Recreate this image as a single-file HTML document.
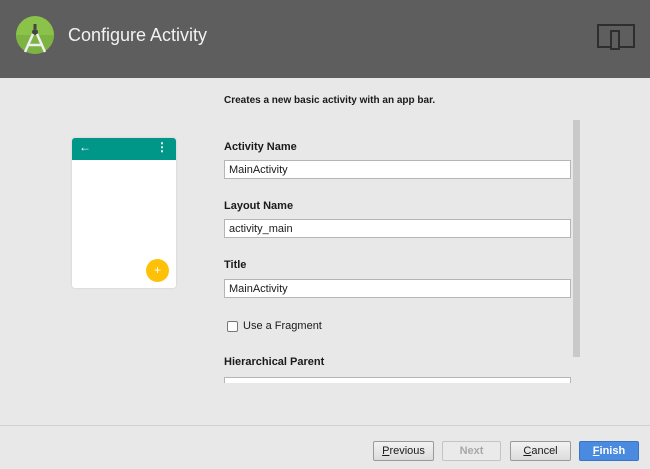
<!DOCTYPE html>
<html><head><style>
*{margin:0;padding:0;box-sizing:border-box}
body{width:650px;height:469px;background:#e8e8e8;font-family:"Liberation Sans",sans-serif;position:relative;overflow:hidden;font-size:11px;color:#1a1a1a}
.hdr{position:absolute;left:0;top:0;width:650px;height:78px;background:#5e5e5e}
.hdr h1{position:absolute;left:68px;top:25px;font-size:18px;font-weight:normal;color:#f2f2f2}
.a{position:absolute}
.lbl{position:absolute;left:224px;font-weight:bold;font-size:11px}
.fld{position:absolute;left:224px;width:347px;height:19px;background:#fff;border:1px solid #b5b5b5;padding:3px 4px;font-size:11px}
.btn{position:absolute;top:441px;height:20px;border:1px solid #9a9a9a;border-radius:2px;background:linear-gradient(#f2f2f2,#dcdcdc);text-align:center;font-size:11px;line-height:18px}
</style></head><body>
<div class="hdr">
<svg class="a" style="left:15px;top:15px" width="40" height="42" viewBox="0 0 40 42">
<circle cx="20" cy="20" r="19" fill="#8bc34a"/>
<path d="M1 20a19 19 0 0 0 38 0z" fill="#7cb342"/>
<circle cx="20" cy="17" r="3" fill="#444"/>
<rect x="18.5" y="9" width="3" height="5" fill="#444"/>
<path d="M18 19 L10 37 M22 19 L30 37 M12 30 L28 30" stroke="#eee" stroke-width="2.5" fill="none"/>
</svg>
<h1>Configure Activity</h1>
<div class="a" style="left:597px;top:24px;width:38px;height:24px;border:2px solid #2e2e2e"></div>
<div class="a" style="left:610px;top:30px;width:10px;height:20px;border:2px solid #2e2e2e;background:#5e5e5e"></div>
</div>
<div class="a" style="left:224px;top:95px;font-weight:bold;font-size:10px">Creates a new basic activity with an app bar.</div>
<div class="a" style="left:72px;top:138px;width:104px;height:150px;background:#fff;border-radius:3px;box-shadow:0 0 2px #ccc;overflow:hidden">
<div style="height:22px;background:#009688;color:#fff;font-size:12px;padding:2px 0 0 7px;position:relative">&#8592;<span style="position:absolute;right:8px;top:2px;font-weight:bold">&#8942;</span></div>
<div style="position:absolute;left:74px;top:121px;width:23px;height:23px;border-radius:50%;background:#ffc107;color:#fff;text-align:center;line-height:22px;font-size:12px">+</div>
</div>
<div class="lbl" style="top:141px">Activity Name</div>
<div class="fld" style="top:160px">MainActivity</div>
<div class="lbl" style="top:200px">Layout Name</div>
<div class="fld" style="top:219px">activity_main</div>
<div class="lbl" style="top:259px">Title</div>
<div class="fld" style="top:279px">MainActivity</div>
<div class="a" style="left:227px;top:321px;width:11px;height:11px;border:1px solid #777;border-radius:2px;background:#fff"></div>
<div class="a" style="left:243px;top:320px">Use a Fragment</div>
<div class="lbl" style="top:356px">Hierarchical Parent</div>
<div class="a" style="left:224px;top:377px;width:347px;height:6px;background:#fff;border:1px solid #b5b5b5;border-bottom:none"></div>
<div class="a" style="left:573px;top:120px;width:7px;height:237px;background:#c9c9c9"></div>
<div class="a" style="left:0;top:425px;width:650px;height:1px;background:#d0d0d0"></div>
<div class="btn" style="left:373px;width:61px"><u>P</u>revious</div>
<div class="btn" style="left:442px;width:59px;background:#eaeaea;border-color:#c4c4c4;color:#a8a8a8;font-weight:bold">Next</div>
<div class="btn" style="left:510px;width:61px"><u>C</u>ancel</div>
<div class="btn" style="left:579px;width:60px;background:#4a8be0;border-color:#3a75c4;color:#fff;font-weight:bold"><u>F</u>inish</div>
</body></html>
